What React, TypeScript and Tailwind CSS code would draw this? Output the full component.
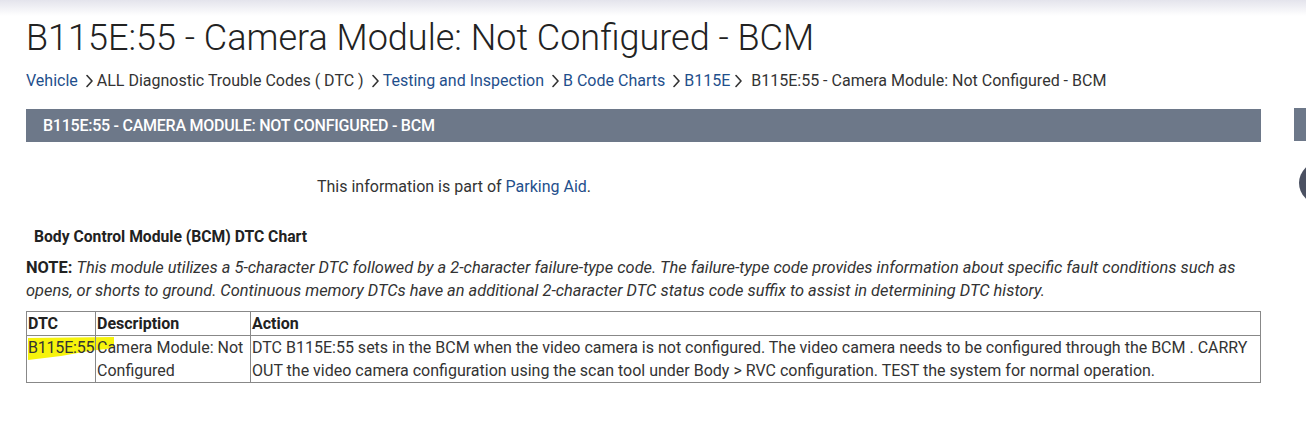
import React from "react";

const Chevron = ({ last = false }: { last?: boolean }) => (
  <svg width="7" height="14" viewBox="0 0 7 14" className={last ? "ml-[5px] mr-[9px] shrink-0" : "ml-[8px] mr-[4px] shrink-0"} aria-hidden>
    <path d="M1 1.5 L6 7 L1 12.5" fill="none" stroke="#333" strokeWidth="1.6" strokeLinecap="round" strokeLinejoin="round" />
  </svg>
);

export default function App() {
  return (
    <div className="relative w-[1306px] h-[429px] overflow-hidden bg-white text-[#333]" style={{ fontFamily: "Roboto, 'Liberation Sans', sans-serif" }}>
      <div className="h-[16px] bg-gradient-to-b from-[#e4e4ec] to-white" />
      <div className="flex">
        <div className="w-[1235px] ml-[26px]">
          <h1 className="text-[36px] leading-[44px] font-light text-[#222]">B115E:55 - Camera Module: Not Configured - BCM</h1>
          <nav className="flex items-center text-[16px] leading-[20px] mt-[11px]">
            <a className="text-[#1f4f8c]">Vehicle</a>
            <Chevron />
            <span className="text-[#333]">ALL Diagnostic Trouble Codes ( DTC )</span>
            <Chevron />
            <a className="text-[#1f4f8c]">Testing and Inspection</a>
            <Chevron />
            <a className="text-[#1f4f8c]">B Code Charts</a>
            <Chevron />
            <a className="text-[#1f4f8c]">B115E</a>
            <Chevron last />
            <span className="text-[#333]">B115E:55 - Camera Module: Not Configured - BCM</span>
          </nav>
          <div className="mt-[18px] h-[33px] bg-[#6d7889] flex items-center pl-[17px]">
            <span className="text-white text-[16px] font-medium tracking-[-0.25px] uppercase">B115E:55 - Camera Module: Not Configured - BCM</span>
          </div>
          <p className="mt-[34px] text-[16px] leading-[22px] pl-[291px]">
            This information is part of <a className="text-[#1f4f8c]">Parking Aid</a>.
          </p>
          <h3 className="mt-[28px] ml-[8px] text-[15.7px] leading-[22px] font-bold text-[#222]">Body Control Module (BCM) DTC Chart</h3>
          <p className="mt-[8px] text-[16.4px] leading-[23px] text-[#333]">
            <b className="font-bold text-[#222]">NOTE:</b>{" "}
            <i>This module utilizes a 5-character DTC followed by a 2-character failure-type code. The failure-type code provides information about specific fault conditions such as opens, or shorts to ground. Continuous memory DTCs have an additional 2-character DTC status code suffix to assist in determining DTC history.</i>
          </p>
          <table className="relative isolate table-fixed mt-[9px] w-full border-collapse text-[16px] leading-[23px]">
            <colgroup>
              <col className="w-[69px]" />
              <col className="w-[155px]" />
              <col />
            </colgroup>
            <thead>
              <tr>
                <th className="border border-[#888] text-left font-bold px-[1px] py-0 text-[#222]">DTC</th>
                <th className="border border-[#888] text-left font-bold px-[1px] py-0 text-[#222]">Description</th>
                <th className="border border-[#888] text-left font-bold px-[1px] py-0 text-[#222]">Action</th>
              </tr>
            </thead>
            <tbody>
              <tr className="align-top">
                <td className="relative border border-[#888] px-[1px] py-0 whitespace-nowrap">
                  <svg className="absolute left-[0px] top-[0px] -z-10 pointer-events-none" width="92" height="28" viewBox="0 0 92 28" aria-hidden>
                    <path d="M1 2 L87 1 L87 12 L62 15 L34 20 L1 24 Z" fill="#f6f30c" />
                  </svg>
                  <span className="tracking-[-0.2px]">B115E:55</span>
                </td>
                <td className="border border-[#888] px-[1px] py-0">Camera Module: Not Configured</td>
                <td className="border border-[#888] px-[1px] py-0">DTC B115E:55 sets in the BCM when the video camera is not configured. The video camera needs to be configured through the BCM . CARRY OUT the video camera configuration using the scan tool under Body &gt; RVC configuration. TEST the system for normal operation.</td>
              </tr>
            </tbody>
          </table>
        </div>
        <div className="ml-[33px] mt-[92px] w-[12px] h-[33px] bg-[#6d7889]" />
      </div>
      <div className="absolute left-[1299px] top-[162px] w-[42px] h-[42px] rounded-full bg-[#4b5162]" />
    </div>
  );
}
